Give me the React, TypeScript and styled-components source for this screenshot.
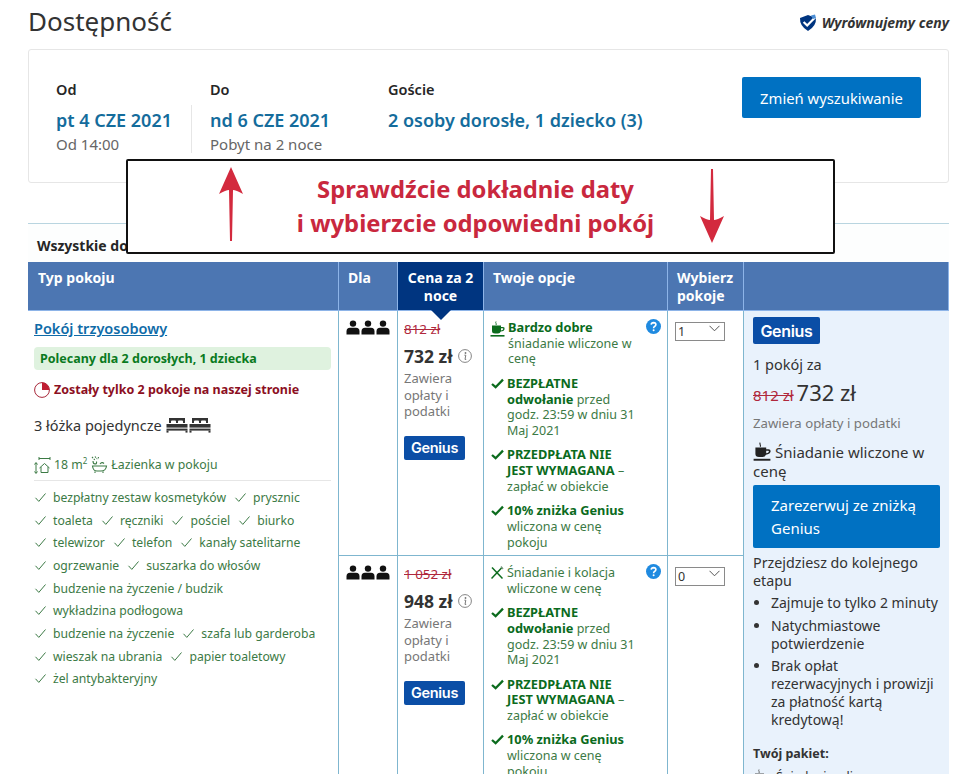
import { ReactNode } from 'react'
import styled, { createGlobalStyle } from 'styled-components'

const GlobalStyle = createGlobalStyle`
  html, body { margin: 0; padding: 0; background: #fff; }
  body { font-family: "Noto Sans", "Open Sans", sans-serif; color: #262626; }
  #root { height: 774px; overflow: hidden; }
`

const Page = styled.div`
  position: relative;
  width: 961px;
  height: 774px;
  overflow: hidden;
  padding: 0 12px 0 28px;
  box-sizing: border-box;
`

const TitleBar = styled.header`
  display: flex;
  justify-content: space-between;
  align-items: center;
  height: 49px;
  padding-bottom: 7px;
  box-sizing: border-box;
`

const Title = styled.h1`
  margin: 0;
  font-size: 26px;
  font-weight: 400;
  color: #333;
`

const PriceMatch = styled.div`
  display: flex;
  align-items: center;
  gap: 5px;
  font-size: 14px;
  font-weight: 700;
  font-style: italic;
  color: #333;
  margin-top: 3px;
`

const SearchCard = styled.section`
  display: flex;
  height: 134px;
  border: 1px solid #e6e6e6;
  border-radius: 3px;
  box-sizing: border-box;
  padding: 30px 27px 0 27px;
`

const DateColumn = styled.div<{ $width: number; $inset?: number; $divider?: boolean }>`
  position: relative;
  width: ${p => p.$width}px;
  height: 73px;
  box-sizing: border-box;
  padding-left: ${p => p.$inset ?? 0}px;

  ${p =>
    p.$divider &&
    `&::after {
      content: '';
      position: absolute;
      right: 0;
      top: 25px;
      height: 48px;
      border-right: 1px solid #e6e6e6;
    }`}
`

const DateLabel = styled.div`
  font-size: 14.5px;
  font-weight: 600;
  line-height: 18px;
`

const DateValue = styled.div`
  font-size: 18px;
  font-weight: 600;
  color: #146c9c;
  margin-top: 11px;
  line-height: 22px;
  white-space: nowrap;
`

const DateNote = styled.div`
  font-size: 15px;
  color: #666;
  line-height: 20px;
  margin-top: 3px;
`

const ChangeButton = styled.button`
  margin-left: auto;
  width: 179px;
  height: 41px;
  margin-top: -3px;
  border: 0;
  border-radius: 2px;
  background: #0071c2;
  color: #fff;
  font: inherit;
  font-size: 14.8px;
`

const Callout = styled.aside`
  position: absolute;
  left: 126px;
  top: 159px;
  width: 709px;
  height: 95px;
  box-sizing: border-box;
  background: #fff;
  border: 2px solid #111;
  border-radius: 2px;
  display: flex;
  align-items: flex-start;
  padding: 6px 108px 0 90px;
`

const CalloutText = styled.div`
  flex: 1;
  text-align: center;
  color: #c9283e;
  font-size: 23.8px;
  font-weight: 700;
  line-height: 34px;
  padding: 5px 0 0 8px;
  white-space: nowrap;
`

const ListTitle = styled.div`
  margin-top: 40px;
  height: 39px;
  box-sizing: border-box;
  border-top: 1px solid #b9d5e0;
  padding: 12px 0 0 9px;
  font-size: 14px;
  font-weight: 700;
  background: #fdfefe;
`

const Table = styled.div`
  display: grid;
  grid-template-columns: 311px 59px 86px 184px 76px 205px;
  grid-template-rows: 49px 245px 300px;
`

const HeadCell = styled.div<{ $active?: boolean }>`
  position: relative;
  background: ${p => (p.$active ? '#003580' : '#4c76b2')};
  color: #fff;
  font-size: 14px;
  font-weight: 700;
  line-height: 18px;
  padding: 7px 8px 7px 9px;
  box-sizing: border-box;
  border-right: 1px solid #8db4e8;
  border-bottom: 1px solid #8db4e8;
  ${p => p.$active && 'text-align: center; padding: 7px 2px;'}
  &:first-child { padding-left: 10px; }
  &:last-child { border-right: 0; }
`

const HeadPointer = styled.span`
  position: absolute;
  left: 50%;
  top: 100%;
  margin-left: -10px;
  border: 10px solid transparent;
  border-top-color: #003580;
  border-bottom: 0;
  z-index: 1;
`

const RoomCell = styled.div`
  grid-column: 1;
  grid-row: 2 / span 2;
  border-right: 1px solid #7fb6cf;
  padding: 7px 7px 0 6px;
`

const RoomName = styled.a`
  display: block;
  font-size: 14.5px;
  font-weight: 600;
  color: #0f6ba8;
  text-decoration: underline;
  line-height: 20px;
`

const Recommended = styled.div`
  margin-top: 9px;
  height: 23px;
  line-height: 24px;
  padding-left: 6px;
  border-radius: 4px;
  background: #dff2df;
  color: #0a7a1e;
  font-size: 12.5px;
  font-weight: 700;
`

const Scarcity = styled.div`
  display: flex;
  align-items: center;
  gap: 4px;
  margin-top: 11px;
  color: #8c0f22;
  font-size: 12.5px;
  font-weight: 700;
  line-height: 18px;
`

const BedsRow = styled.div`
  display: flex;
  align-items: center;
  gap: 1px;
  margin-top: 16px;
  font-size: 14.5px;
  color: #333;
  line-height: 20px;

  svg:first-of-type { margin-left: 3px; }
`

const Facts = styled.div`
  display: flex;
  align-items: center;
  gap: 3px;
  margin-top: 21px;
  padding-bottom: 6px;
  border-bottom: 1px solid #e6e6e6;
  font-size: 12.3px;
  color: #3c7a45;
  line-height: 18px;

  sup { font-size: 8px; line-height: 0; }
`

const Amenities = styled.div`
  margin-top: 5px;
`

const AmenityRow = styled.div`
  display: flex;
  gap: 8px;
  height: 22.7px;
  align-items: center;
`

const Amenity = styled.span`
  display: inline-flex;
  align-items: center;
  gap: 6px;
  font-size: 12.2px;
  color: #3c7a45;
  white-space: nowrap;
`

const GuestCell = styled.div`
  border-right: 1px solid #7fb6cf;
  border-bottom: 1px solid #7fb6cf;
  padding: 8px 0 0 7px;
`

const PriceCell = styled.div`
  border-right: 1px solid #7fb6cf;
  border-bottom: 1px solid #7fb6cf;
  padding: 10px 4px 0 6px;
`

const OldPrice = styled.div`
  font-size: 13.4px;
  line-height: 16px;
  color: #b0283c;
  text-decoration: line-through;
`

const NewPrice = styled.div`
  display: flex;
  align-items: center;
  gap: 5px;
  margin-top: 8px;
  font-size: 17.5px;
  font-weight: 700;
  line-height: 22px;
  color: #333;
`

const TaxNote = styled.div`
  margin-top: 3px;
  font-size: 13px;
  line-height: 16.5px;
  color: #777;
`

const GeniusBadge = styled.div<{ $large?: boolean }>`
  display: flex;
  align-items: center;
  justify-content: center;
  width: ${p => (p.$large ? 67 : 61)}px;
  height: ${p => (p.$large ? 27 : 24)}px;
  margin-top: ${p => (p.$large ? 0 : 16)}px;
  border-radius: 2px;
  background: #0b4ea6;
  color: #fff;
  font-family: "Inter", "Noto Sans", sans-serif;
  font-size: ${p => (p.$large ? 16 : 14.5)}px;
  font-weight: 600;
  letter-spacing: -0.3px;
`

const OptionsCell = styled.div`
  position: relative;
  border-right: 1px solid #7fb6cf;
  border-bottom: 1px solid #7fb6cf;
  padding: 9px 28px 0 6px;
`

const HelpIcon = styled.span`
  position: absolute;
  right: 6px;
  top: 8px;
  display: flex;
`

const Option = styled.div`
  display: flex;
  gap: 3px;
  margin-bottom: 8.7px;
  font-size: 12.5px;
  line-height: 15.7px;
  color: #3c7a45;
`

const OptionIcon = styled.span`
  flex: 0 0 14px;
  display: flex;
  justify-content: center;
  padding-top: 1px;
`

const Strong = styled.b`
  color: #0b6b1d;
  font-size: 12.8px;
  font-weight: 700;
`

const SelectCell = styled.div`
  border-right: 1px solid #7fb6cf;
  border-bottom: 1px solid #7fb6cf;
  padding: 8px 0 0 7px;
`

const SelectBox = styled.div`
  position: relative;
  width: 50px;
  height: 19px;
`

const RoomSelect = styled.select`
  appearance: none;
  width: 100%;
  height: 100%;
  padding: 0 0 0 2px;
  border: 1px solid #8a8a8a;
  border-radius: 0;
  background: #fff;
  font: inherit;
  font-size: 12.5px;
  color: #333;
`

const Chevron = styled.svg`
  position: absolute;
  right: 5px;
  top: 6px;
  pointer-events: none;
`

const BookCell = styled.div`
  grid-column: 6;
  grid-row: 2 / span 2;
  background: #e9f2fc;
  padding: 6px 9px 0 9px;
  color: #333;
`

const BookLine = styled.div`
  margin-top: 10px;
  font-size: 14.5px;
  line-height: 20px;
`

const BookPrice = styled.div`
  display: flex;
  align-items: baseline;
  margin-top: 4px;
  font-size: 22px;
  line-height: 28px;
  span {
    font-size: 15px;
    color: #b0283c;
    text-decoration: line-through;
    margin-right: 3px;
  }
`

const BookTax = styled.div`
  margin-top: 5px;
  font-size: 13.2px;
  line-height: 18px;
  color: #777;
`

const BreakfastLine = styled.div`
  margin-top: 10px;
  font-size: 15px;
  line-height: 18px;
  svg { vertical-align: -4px; margin-right: 4px; }
`

const ReserveButton = styled.button`
  display: block;
  width: 187px;
  height: 63px;
  margin: 5px 0 6px;
  padding: 0 10px 0 18px;
  border: 0;
  border-radius: 2px;
  background: #0071c2;
  color: #fff;
  font: inherit;
  font-size: 15px;
  line-height: 23px;
  text-align: left;
`

const NextStep = styled.div`
  font-size: 14.3px;
  line-height: 18px;
`

const Perks = styled.ul`
  margin: 4px 0 0;
  padding: 0 0 0 18px;
  font-size: 14px;
  line-height: 18px;
  li { margin-bottom: 4.4px; }
`

const PackageTitle = styled.div`
  margin-top: 16px;
  font-size: 12.5px;
  font-weight: 700;
  line-height: 18px;
`

const PackageLine = styled.div`
  display: flex;
  gap: 8px;
  margin-top: 6px;
  font-size: 12.5px;
  line-height: 16px;
`

const PeopleIcon = () => (
  <svg width="44" height="16" viewBox="0 0 44 16" fill="#111">
    {[0, 15, 30].map(x => (
      <g key={x} transform={`translate(${x} 0)`}>
        <circle cx="7" cy="3.6" r="3.2" />
        <path d="M0.5 14.5 V11.5 Q0.5 7.8 4 7.8 H10 Q13.5 7.8 13.5 11.5 V14.5 Z" />
      </g>
    ))}
  </svg>
)

const ThickCheck = () => (
  <svg width="13" height="12" viewBox="0 0 13 12">
    <path d="M1 7 L4.6 10.2 L12 2.6" fill="none" stroke="#0b6b1d" strokeWidth="2.3" />
  </svg>
)

const ThinCheck = () => (
  <svg width="13" height="11" viewBox="0 0 13 11">
    <path d="M1.5 5.8 L4.8 9.4 L11.5 1.5" fill="none" stroke="#3c7a45" strokeWidth="1" />
  </svg>
)

const CoffeeIcon = ({ color, size = 15 }: { color: string; size?: number }) => (
  <svg width={size} height={(size * 17) / 15} viewBox="0 0 15 17" fill={color}>
    <path d="M6 0.5 C5 2 7 2.5 6 4" fill="none" stroke={color} strokeWidth="0.9" />
    <path d="M2 4.5 H11 V6 H13 Q15 6 14.6 8.2 Q14 10.4 10.8 10.6 Q10 12.5 8 12.5 H5 Q2 12.5 2 10 Z M11 7.2 V9.4 Q13 9.2 13.3 8 Q13.4 7.2 12.6 7.2 Z" />
    <rect x="0.5" y="14" width="14" height="1.6" />
  </svg>
)

const MealIcon = () => (
  <svg width="14" height="14" viewBox="0 0 14 14">
    <path d="M2 1.5 L12.5 12.5" stroke="#0b6b1d" strokeWidth="1.5" />
    <path d="M12 1.5 L1.5 12.5" stroke="#0b6b1d" strokeWidth="1.5" />
    <path d="M11 0.5 L13 3" stroke="#7a9a80" strokeWidth="1.4" />
  </svg>
)

const HelpBadge = () => (
  <svg width="15" height="15" viewBox="0 0 15 15">
    <circle cx="7.5" cy="7.5" r="7.5" fill="#1f8ae0" />
    <path d="M5.2 5.7 Q5.4 3.6 7.6 3.6 Q9.9 3.7 9.9 5.6 Q9.9 6.8 8.6 7.4 Q7.6 7.9 7.6 9.2" fill="none" stroke="#fff" strokeWidth="1.6" />
    <circle cx="7.6" cy="11.3" r="1" fill="#fff" />
  </svg>
)

const InfoIcon = () => (
  <svg width="14" height="14" viewBox="0 0 14 14">
    <circle cx="7" cy="7" r="6.4" fill="none" stroke="#777" strokeWidth="0.9" />
    <circle cx="7.5" cy="4" r="0.9" fill="#777" />
    <path d="M6.4 6.2 H7.8 L7 10.4 H8.2" fill="none" stroke="#777" strokeWidth="1" />
  </svg>
)

const BedIcon = () => (
  <svg width="22" height="16" viewBox="0 0 22 16" fill="#333">
    <path d="M3 1 H19 V6 H17 V4.5 Q17 3.5 16 3.5 H13 Q12 3.5 12 4.5 V6 H10 V4.5 Q10 3.5 9 3.5 H6 Q5 3.5 5 4.5 V6 H3 Z" />
    <rect x="0.5" y="7" width="21" height="3.6" />
    <rect x="0.5" y="11.6" width="21" height="2" />
    <rect x="0.5" y="13.6" width="2" height="2" />
    <rect x="19.5" y="13.6" width="2" height="2" />
  </svg>
)

const AreaIcon = () => (
  <svg width="17" height="17" viewBox="0 0 17 17" fill="none" stroke="#3c7a45" strokeWidth="1">
    <path d="M5 1.5 H16 M5 0 V3 M16 0 V3" />
    <path d="M2 6 V16 M0.5 7.5 L2 5.5 L3.5 7.5 M0.5 14.5 L2 16.5 L3.5 14.5" />
    <path d="M5.5 11 L10.5 6.5 L15.5 11 M7 10 V15.5 H14 V10" />
  </svg>
)

const BathIcon = () => (
  <svg width="18" height="18" viewBox="0 0 18 18" fill="none" stroke="#3c7a45" strokeWidth="1.1">
    <path d="M2 1 L5 4 M5 0.5 L7 3 M8.5 1 L8 3.5" strokeDasharray="1.5 1" />
    <path d="M3 5 Q3 8 5 8 Q7 8 6.5 5.5" />
    <path d="M2.5 10 H16.5 Q16 15 11 15 H7 Q3 15 2.5 10 Z" />
    <path d="M10 8 Q12 5.5 14 7.5 M5 15.5 V17 M13 15.5 V17" />
  </svg>
)

const PieIcon = () => (
  <svg width="16" height="16" viewBox="0 0 16 16">
    <circle cx="8" cy="8" r="7.4" fill="#fff" stroke="#a8283a" strokeWidth="1" />
    <path d="M8 8 V0.6 A7.4 7.4 0 0 1 15.4 8 Z" fill="#c01e32" />
  </svg>
)

const ShieldIcon = () => (
  <svg width="18" height="18" viewBox="0 0 18 18">
    <path d="M1 4 L9 1 L17 4 Q17.5 12 9 17 Q0.5 12 1 4 Z" fill="#003580" />
    <path d="M4.6 8 L8.2 11.5 L16.5 3" fill="none" stroke="#fff" strokeWidth="2.2" />
    <path d="M12 1.5 L16 0.5 L17 4 L14 5 Z" fill="#4c8fd6" />
  </svg>
)

const UpArrow = () => (
  <svg width="26" height="76" viewBox="0 0 26 76">
    <path d="M13 0 L25 27 Q18 23 15 23 L14 74 H12 L11 23 Q8 23 1 27 Z" fill="#d32a3e" />
  </svg>
)

const DownArrow = () => (
  <svg width="26" height="76" viewBox="0 0 26 76">
    <path d="M13 76 L25 49 Q18 53 15 53 L14 2 H12 L11 53 Q8 53 1 49 Z" fill="#d32a3e" />
  </svg>
)

const amenityRows = [
  ['bezpłatny zestaw kosmetyków', 'prysznic'],
  ['toaleta', 'ręczniki', 'pościel', 'biurko'],
  ['telewizor', 'telefon', 'kanały satelitarne'],
  ['ogrzewanie', 'suszarka do włosów'],
  ['budzenie na życzenie / budzik'],
  ['wykładzina podłogowa'],
  ['budzenie na życzenie', 'szafa lub garderoba'],
  ['wieszak na ubrania', 'papier toaletowy'],
  ['żel antybakteryjny'],
]

const perks = [
  'Zajmuje to tylko 2 minuty',
  'Natychmiastowe potwierdzenie',
  'Brak opłat rezerwacyjnych i prowizji za płatność kartą kredytową!',
]

type OptionRowProps = { icon: ReactNode; children: ReactNode }

const OptionRow = ({ icon, children }: OptionRowProps) => (
  <Option>
    <OptionIcon>{icon}</OptionIcon>
    <div>{children}</div>
  </Option>
)

type RateProps = {
  oldPrice: string
  price: string
  meal: ReactNode
  rooms: string
}

const Rate = ({ oldPrice, price, meal, rooms }: RateProps) => (
  <>
    <GuestCell>
      <PeopleIcon />
    </GuestCell>
    <PriceCell>
      <OldPrice>{oldPrice}</OldPrice>
      <NewPrice>
        {price} <InfoIcon />
      </NewPrice>
      <TaxNote>
        Zawiera
        <br />
        opłaty i
        <br />
        podatki
      </TaxNote>
      <GeniusBadge>Genius</GeniusBadge>
    </PriceCell>
    <OptionsCell>
      <HelpIcon>
        <HelpBadge />
      </HelpIcon>
      {meal}
      <OptionRow icon={<ThickCheck />}>
        <Strong>
          BEZPŁATNE
          <br />
          odwołanie
        </Strong>{' '}
        przed godz. 23:59 w dniu 31 Maj 2021
      </OptionRow>
      <OptionRow icon={<ThickCheck />}>
        <Strong>
          PRZEDPŁATA NIE
          <br />
          JEST WYMAGANA
        </Strong>{' '}
        – zapłać w obiekcie
      </OptionRow>
      <OptionRow icon={<ThickCheck />}>
        <Strong>10% zniżka Genius</Strong>
        <br />
        wliczona w cenę pokoju
      </OptionRow>
    </OptionsCell>
    <SelectCell>
      <SelectBox>
        <RoomSelect defaultValue={rooms}>
          <option value="0">0</option>
          <option value="1">1</option>
          <option value="2">2</option>
        </RoomSelect>
        <Chevron width="11" height="7" viewBox="0 0 11 7">
          <path d="M0.5 0.8 L5.5 5.8 L10.5 0.8" fill="none" stroke="#555" strokeWidth="1" />
        </Chevron>
      </SelectBox>
    </SelectCell>
  </>
)

export default function App() {
  return (
    <Page>
      <GlobalStyle />
      <TitleBar>
        <Title>Dostępność</Title>
        <PriceMatch>
          <ShieldIcon />
          Wyrównujemy ceny
        </PriceMatch>
      </TitleBar>

      <SearchCard>
        <DateColumn $width={136} $divider>
          <DateLabel>Od</DateLabel>
          <DateValue>pt 4 CZE 2021</DateValue>
          <DateNote>Od 14:00</DateNote>
        </DateColumn>
        <DateColumn $width={196} $inset={18}>
          <DateLabel>Do</DateLabel>
          <DateValue>nd 6 CZE 2021</DateValue>
          <DateNote>Pobyt na 2 noce</DateNote>
        </DateColumn>
        <DateColumn $width={300}>
          <DateLabel>Goście</DateLabel>
          <DateValue>2 osoby dorosłe, 1 dziecko (3)</DateValue>
        </DateColumn>
        <ChangeButton>Zmień wyszukiwanie</ChangeButton>
      </SearchCard>

      <Callout>
        <UpArrow />
        <CalloutText>
          Sprawdźcie dokładnie daty
          <br />i wybierzcie odpowiedni pokój
        </CalloutText>
        <DownArrow />
      </Callout>

      <ListTitle>Wszystkie dostępne pokoje</ListTitle>

      <Table>
        <HeadCell>Typ pokoju</HeadCell>
        <HeadCell>Dla</HeadCell>
        <HeadCell $active>
          Cena za 2 noce
          <HeadPointer />
        </HeadCell>
        <HeadCell>Twoje opcje</HeadCell>
        <HeadCell>Wybierz pokoje</HeadCell>
        <HeadCell />

        <RoomCell>
          <RoomName>Pokój trzyosobowy</RoomName>
          <Recommended>Polecany dla 2 dorosłych, 1 dziecka</Recommended>
          <Scarcity>
            <PieIcon />
            Zostały tylko 2 pokoje na naszej stronie
          </Scarcity>
          <BedsRow>
            3 łóżka pojedyncze
            <BedIcon />
            <BedIcon />
          </BedsRow>
          <Facts>
            <AreaIcon />
            <span>
              18 m<sup>2</sup>
            </span>
            <BathIcon />
            Łazienka w pokoju
          </Facts>
          <Amenities>
            {amenityRows.map(row => (
              <AmenityRow key={row[0]}>
                {row.map(item => (
                  <Amenity key={item}>
                    <ThinCheck />
                    {item}
                  </Amenity>
                ))}
              </AmenityRow>
            ))}
          </Amenities>
        </RoomCell>

        <Rate
          oldPrice="812 zł"
          price="732 zł"
          rooms="1"
          meal={
            <OptionRow icon={<CoffeeIcon color="#0b6b1d" />}>
              <Strong>Bardzo dobre</Strong>
              <br />
              śniadanie wliczone w cenę
            </OptionRow>
          }
        />

        <BookCell>
          <GeniusBadge $large>Genius</GeniusBadge>
          <BookLine>1 pokój za</BookLine>
          <BookPrice>
            <span>812 zł</span> 732 zł
          </BookPrice>
          <BookTax>Zawiera opłaty i podatki</BookTax>
          <BreakfastLine>
            <CoffeeIcon color="#222" size={18} />
            Śniadanie wliczone w cenę
          </BreakfastLine>
          <ReserveButton>Zarezerwuj ze zniżką Genius</ReserveButton>
          <NextStep>Przejdziesz do kolejnego etapu</NextStep>
          <Perks>
            {perks.map(perk => (
              <li key={perk}>{perk}</li>
            ))}
          </Perks>
          <PackageTitle>Twój pakiet:</PackageTitle>
          <PackageLine>
            <CoffeeIcon color="#555" />
            Śniadanie wliczone w cenę
          </PackageLine>
        </BookCell>

        <Rate
          oldPrice="1 052 zł"
          price="948 zł"
          rooms="0"
          meal={
            <OptionRow icon={<MealIcon />}>
              Śniadanie i kolacja
              <br />
              wliczone w cenę
            </OptionRow>
          }
        />
      </Table>
    </Page>
  )
}
